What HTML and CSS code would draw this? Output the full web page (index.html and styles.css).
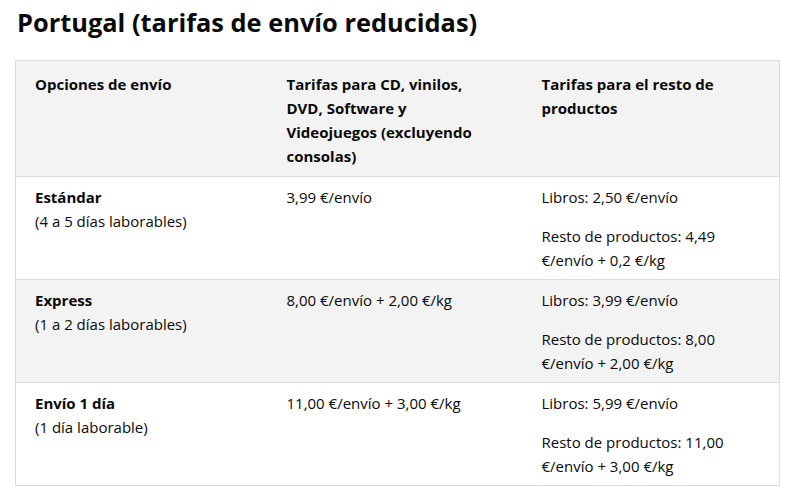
FILE: index.html
```html
<!DOCTYPE html>
<html lang="es">
<head>
<meta charset="utf-8">
<link rel="stylesheet" href="styles.css">
</head>
<body>
<h2 class="title">Portugal (tarifas de envío reducidas)</h2>
<table class="rates">
  <colgroup>
    <col class="c1">
    <col class="c2">
    <col class="c3">
  </colgroup>
  <thead>
    <tr>
      <th>Opciones de envío</th>
      <th>Tarifas para CD, vinilos, DVD, Software y Videojuegos (excluyendo consolas)</th>
      <th>Tarifas para el resto de productos</th>
    </tr>
  </thead>
  <tbody>
    <tr>
      <td><b>Estándar</b><br>(4 a 5 días laborables)</td>
      <td>3,99 €/envío</td>
      <td><p>Libros: 2,50 €/envío</p><p>Resto de productos: 4,49 €/envío + 0,2 €/kg</p></td>
    </tr>
    <tr class="alt">
      <td><b>Express</b><br>(1 a 2 días laborables)</td>
      <td>8,00 €/envío + 2,00 €/kg</td>
      <td><p>Libros: 3,99 €/envío</p><p>Resto de productos: 8,00 €/envío + 2,00 €/kg</p></td>
    </tr>
    <tr>
      <td><b>Envío 1 día</b><br>(1 día laborable)</td>
      <td>11,00 €/envío + 3,00 €/kg</td>
      <td><p>Libros: 5,99 €/envío</p><p>Resto de productos: 11,00 €/envío + 3,00 €/kg</p></td>
    </tr>
  </tbody>
</table>
</body>
</html>
```
FILE: styles.css
```css
html, body {
  margin: 0;
  padding: 0;
  background: #fff;
}
body {
  font-family: "Open Sans", "Liberation Sans", sans-serif;
  color: #0a0a0a;
  padding: 0 21px 0 15px;
}
.title {
  margin: 0;
  padding: 4px 0 0 2px;
  font-size: 25.4px;
  line-height: 36px;
  font-weight: 700;
  height: 56px;
  box-sizing: border-box;
}
.rates {
  width: 764px;
  border-collapse: collapse;
  table-layout: fixed;
  border: 1px solid #ddd;
  font-size: 15px;
  line-height: 24px;
  font-weight: 500;
  margin-top: 4px;
}
.c1 { width: 252px; }
.c2 { width: 255px; }
.c3 { width: 257px; }
.rates th, .rates td {
  text-align: left;
  vertical-align: top;
  padding: 8px 28px 7px 19px;
  border-top: 1px solid #ddd;
}
.rates th {
  font-weight: 700;
  background: #f3f3f3;
  padding-top: 11px;
  padding-bottom: 8px;
}
.rates b {
  font-weight: 700;
}
.rates tr.alt td {
  background: #f3f3f3;
}
.rates p {
  margin: 0;
}
.rates p + p {
  margin-top: 15px;
}
```
